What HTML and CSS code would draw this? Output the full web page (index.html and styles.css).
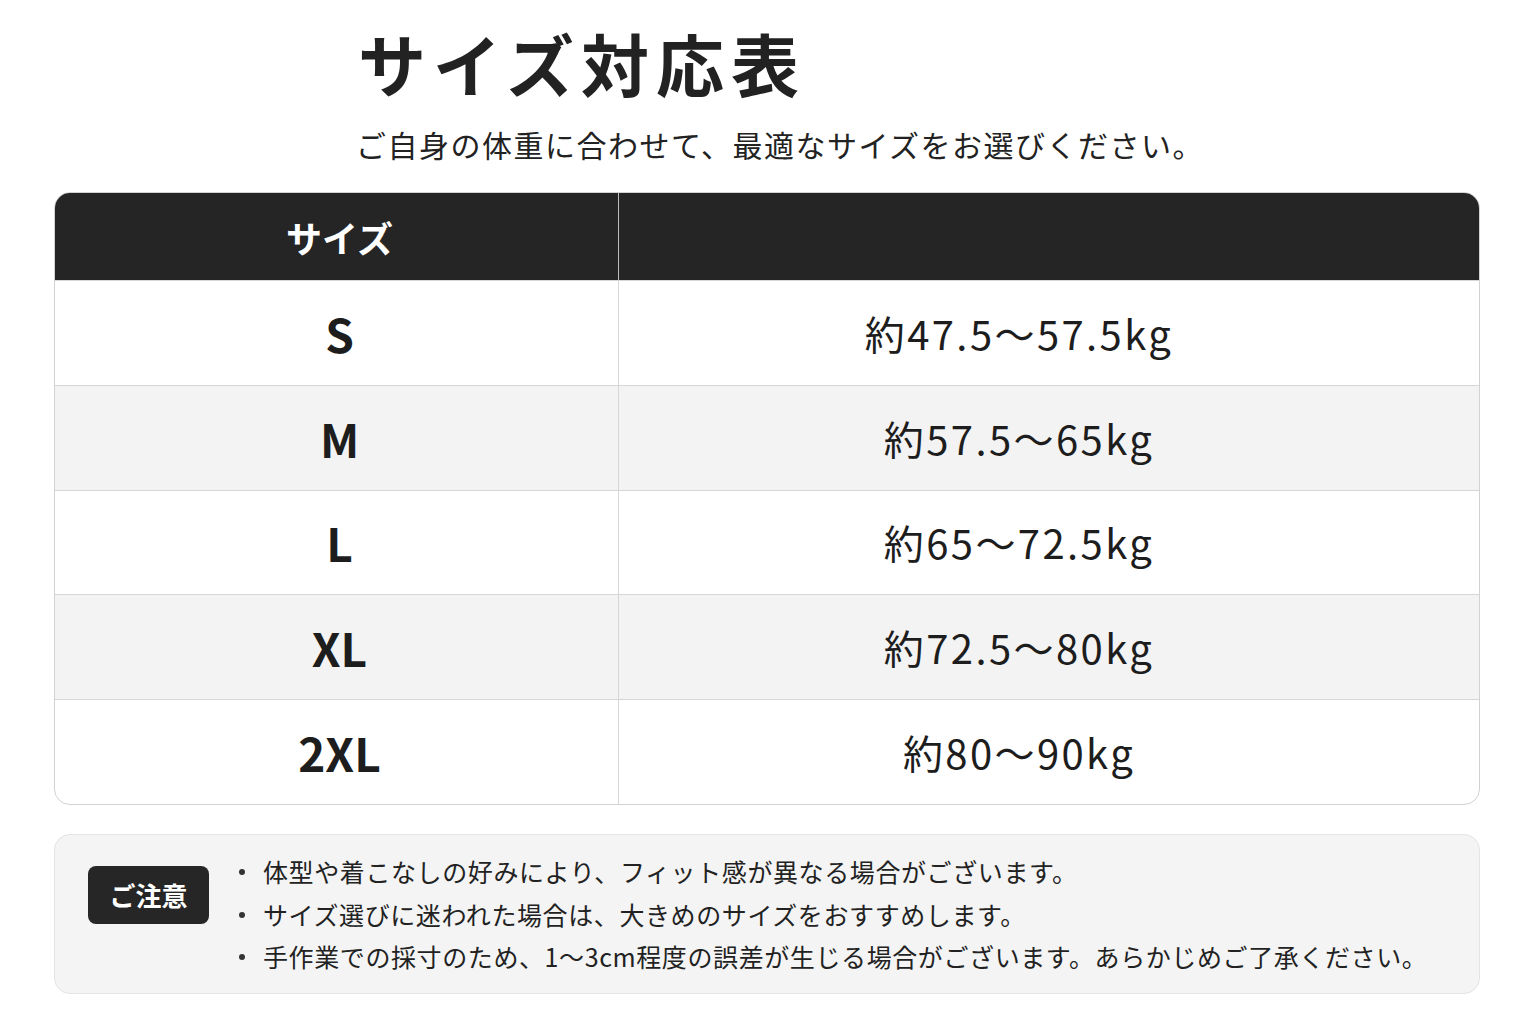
FILE: index.html
```html
<!DOCTYPE html>
<html lang="ja">
<head>
<meta charset="utf-8">
<link rel="stylesheet" href="styles.css">
</head>
<body>
<div class="page">
  <header class="intro">
    <h1 class="title">サイズ対応表</h1>
    <p class="subtitle">ご自身の体重に合わせて、最適なサイズをお選びください。</p>
  </header>

  <div class="table">
    <div class="row head">
      <div class="cell size">サイズ</div>
      <div class="cell weight"></div>
    </div>
    <div class="row">
      <div class="cell size">S</div>
      <div class="cell weight">約47.5〜57.5kg</div>
    </div>
    <div class="row alt">
      <div class="cell size">M</div>
      <div class="cell weight">約57.5〜65kg</div>
    </div>
    <div class="row">
      <div class="cell size">L</div>
      <div class="cell weight">約65〜72.5kg</div>
    </div>
    <div class="row alt">
      <div class="cell size">XL</div>
      <div class="cell weight">約72.5〜80kg</div>
    </div>
    <div class="row last">
      <div class="cell size">2XL</div>
      <div class="cell weight">約80〜90kg</div>
    </div>
  </div>

  <section class="note">
    <div class="badge">ご注意</div>
    <ul class="note-list">
      <li>体型や着こなしの好みにより、フィット感が異なる場合がございます。</li>
      <li>サイズ選びに迷われた場合は、大きめのサイズをおすすめします。</li>
      <li>手作業での採寸のため、1〜3cm程度の誤差が生じる場合がございます。あらかじめご了承ください。</li>
    </ul>
  </section>
</div>
</body>
</html>
```

FILE: styles.css
```css
* { box-sizing: border-box; }

html, body {
  margin: 0;
  padding: 0;
  background: #ffffff;
}

body {
  font-family: "Noto Sans CJK JP", "Noto Sans", sans-serif;
  color: #1f1f1f;
}

.page {
  width: 1536px;
  height: 1024px;
  padding: 22px 56px 0 54px;
}

.intro {
  padding-left: 304px;
}

.title {
  margin: 0;
  font-size: 68px;
  line-height: 82px;
  font-weight: 700;
  letter-spacing: 7px;
  color: #222;
}

.subtitle {
  margin: 20px 0 0 -2px;
  font-size: 30px;
  line-height: 40px;
  letter-spacing: 1.5px;
  color: #222;
}

.table {
  margin-top: 28px;
  width: 1426px;
  border: 1px solid #d2d2d2;
  border-radius: 16px;
  overflow: hidden;
  background: #fff;
}

.row {
  display: grid;
  grid-template-columns: 564px 1fr;
  height: 104.8px;
  border-top: 1px solid #d6d6d6;
}

.row.alt { background: #f3f3f3; }

.row.head {
  height: 87px;
  border-top: none;
  background: #252525;
  color: #fff;
}

.cell {
  display: flex;
  align-items: center;
  justify-content: center;
}

.cell.size {
  border-right: 1px solid #d6d6d6;
  font-size: 46px;
  font-weight: 700;
  color: #1d1d1d;
  padding-left: 6px;
}

.head .cell.size {
  border-right: 1px solid #bdbdbd;
  color: #fff;
  font-size: 36px;
  padding-left: 6px;
}

.cell.weight {
  font-size: 40px;
  letter-spacing: 2.4px;
  color: #1d1d1d;
  padding-right: 60px;
}

.note {
  margin-top: 29px;
  width: 1426px;
  height: 160px;
  background: #f4f4f4;
  border: 1px solid #e4e4e4;
  border-radius: 16px;
  display: flex;
  align-items: center;
  padding-left: 33px;
}

.badge {
  align-self: flex-start;
  margin-top: 31px;
  background: #262626;
  color: #fff;
  font-size: 26px;
  font-weight: 700;
  width: 121px;
  height: 58px;
  border-radius: 8px;
  display: flex;
  align-items: center;
  justify-content: center;
  flex-shrink: 0;
}

.note-list {
  list-style: none;
  margin: 0 0 0 27px;
  padding: 0;
}

.note-list li {
  font-size: 25px;
  line-height: 42.5px;
  letter-spacing: 0.6px;
  color: #222;
  position: relative;
  padding-left: 27px;
}

.note-list li::before {
  content: "";
  position: absolute;
  left: 3px;
  top: 19px;
  width: 6px;
  height: 6px;
  border-radius: 50%;
  background: #333;
}
```
